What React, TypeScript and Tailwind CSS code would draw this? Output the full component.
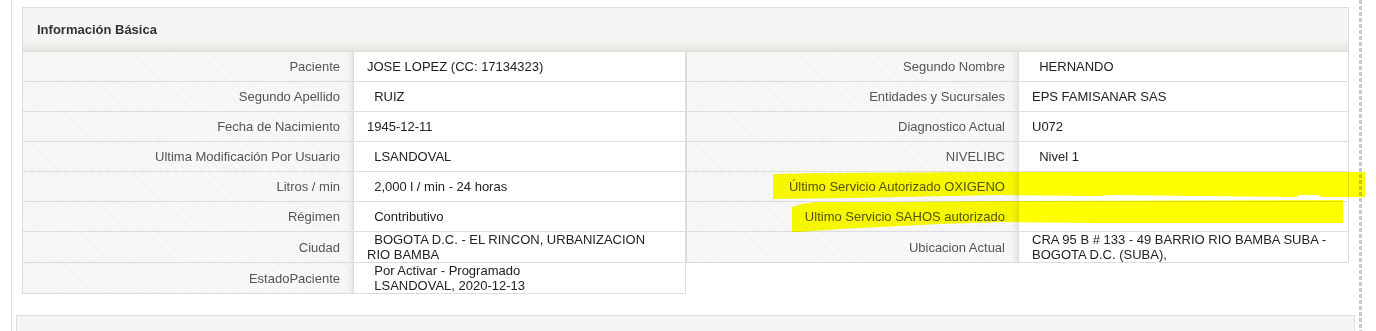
import React from "react";

type Row = { label: string; value: React.ReactNode };

const NB = "\u00a0\u00a0";

const leftRows: Row[] = [
  { label: "Paciente", value: "JOSE LOPEZ (CC: 17134323)" },
  { label: "Segundo Apellido", value: NB + "RUIZ" },
  { label: "Fecha de Nacimiento", value: "1945-12-11" },
  { label: "Ultima Modificación Por Usuario", value: NB + "LSANDOVAL" },
  { label: "Litros / min", value: NB + "2,000 l / min - 24 horas" },
  { label: "Régimen", value: NB + "Contributivo" },
  { label: "Ciudad", value: NB + "BOGOTA D.C. - EL RINCON, URBANIZACION RIO BAMBA" },
  {
    label: "EstadoPaciente",
    value: (
      <>
        {NB}Por Activar - Programado
        <br />
        {NB}LSANDOVAL, 2020-12-13
      </>
    ),
  },
];

const rightRows: Row[] = [
  { label: "Segundo Nombre", value: NB + "HERNANDO" },
  { label: "Entidades y Sucursales", value: "EPS FAMISANAR SAS" },
  { label: "Diagnostico Actual", value: "U072" },
  { label: "NIVELIBC", value: NB + "Nivel 1" },
  { label: "Último Servicio Autorizado OXIGENO", value: "" },
  { label: "Ultimo Servicio SAHOS autorizado", value: "" },
  { label: "Ubicacion Actual", value: "CRA 95 B # 133 - 49 BARRIO RIO BAMBA SUBA - BOGOTA D.C. (SUBA)," },
];

function InfoTable({ rows, cols }: { rows: Row[]; cols: string }) {
  return (
    <div className="border border-[#dddddd]">
      {rows.map((r, i) => (
        <div
          key={i}
          className={`grid ${cols} ${i < rows.length - 1 ? "border-b border-[#dddddd]" : ""}`}
        >
          <div className="flex min-h-[29px] items-center justify-end border-r border-[#dddddd] bg-[image:repeating-linear-gradient(45deg,#f5f5f5_0px,#f5f5f5_3px,#f8f8f8_3px,#f8f8f8_6px)] pr-[13px] text-right text-[#555555] shadow-[inset_-7px_0_7px_-5px_rgba(0,0,0,0.09)]">
            {r.label}
          </div>
          <div className="flex min-h-[29px] items-center bg-white pl-[13px] pr-[17px] text-[#222222]">
            <div>{r.value}</div>
          </div>
        </div>
      ))}
    </div>
  );
}

export default function App() {
  return (
    <div className="relative h-[331px] w-[1376px] overflow-hidden bg-white font-['Liberation_Sans',Arial,sans-serif] text-[13px] leading-[15px]">
      <div className="flex h-full">
        <div className="w-[11px] shrink-0" />
        <div className="w-[1348px] shrink-0 border-l border-[#dddddd] pt-[7px]">
          <section className="ml-[10px] w-[1327px]">
            <div className="flex h-[44px] items-center border border-b-0 border-[#dddddd] bg-gradient-to-b from-[#f5f5f5] from-[72%] to-[#e5e5df] pl-[14px] font-bold text-[#333333]">
              Información Básica
            </div>
            <div className="grid grid-cols-[664px_663px] items-start">
              <InfoTable rows={leftRows} cols="grid-cols-[331px_1fr]" />
              <InfoTable rows={rightRows} cols="grid-cols-[332px_1fr]" />
            </div>
          </section>
          <div className="ml-[4px] mt-[21px] h-[40px] w-[1339px] border border-[#dddddd] bg-[#f5f5f5]" />
        </div>
        <div className="w-[3px] shrink-0 bg-[image:repeating-linear-gradient(to_bottom,#c8c8c8_0px,#c8c8c8_4px,transparent_4px,transparent_6px)]" />
      </div>
      <svg
        className="pointer-events-none absolute left-0 top-0 mix-blend-multiply"
        width="1376"
        height="331"
        viewBox="0 0 1376 331"
      >
        <polygon
          fill="#ffff00"
          points="773,174 820,173 1000,172 1200,172 1365,172 1365,197 1322,197 1318,195 1300,195 1296,197 1200,196 1110,195 1098,196 1000,195 900,197 850,198 773,199"
        />
        <polygon
          fill="#ffff00"
          points="792,207 802,204 815,202 900,202 1000,201 1343,200 1343,223 1200,223 1100,223 1000,222 940,224 880,227 840,229 800,232 792,232"
        />
      </svg>
    </div>
  );
}
